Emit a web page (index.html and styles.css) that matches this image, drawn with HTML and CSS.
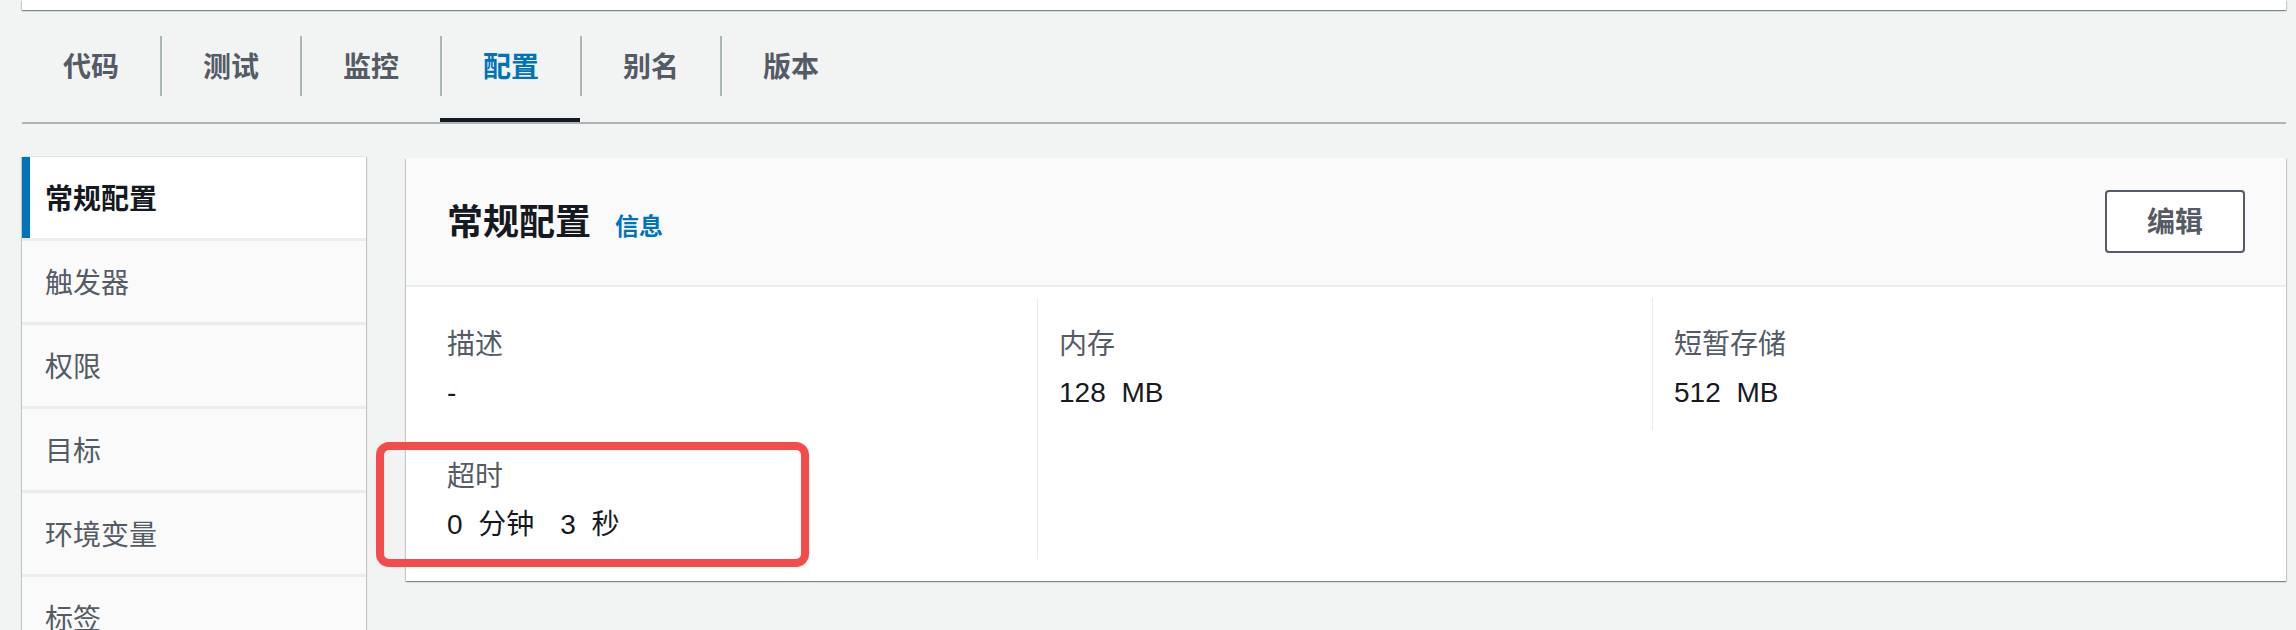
FILE: index.html
```html
<!DOCTYPE html>
<html lang="zh-CN">
<head>
<meta charset="utf-8">
<title>常规配置</title>
<link rel="stylesheet" href="styles.css">
</head>
<body>
<div class="topcard"></div>

<nav class="tabs">
  <div class="tab"><span class="tab-label first">代码</span></div>
  <div class="tab"><span class="tab-label">测试</span></div>
  <div class="tab"><span class="tab-label">监控</span></div>
  <div class="tab active"><span class="tab-label">配置</span></div>
  <div class="tab"><span class="tab-label">别名</span></div>
  <div class="tab"><span class="tab-label">版本</span></div>
</nav>

<div class="main">
  <aside class="sidenav">
    <div class="nav-item active">常规配置</div>
    <div class="nav-item">触发器</div>
    <div class="nav-item">权限</div>
    <div class="nav-item">目标</div>
    <div class="nav-item">环境变量</div>
    <div class="nav-item">标签</div>
    <div class="nav-item">VPC</div>
  </aside>

  <section class="card">
    <header class="card-header">
      <div class="title-group">
        <h2 class="card-title">常规配置</h2>
        <a class="info-link">信息</a>
      </div>
      <button class="btn">编辑</button>
    </header>
    <div class="card-body">
      <div class="col col-first">
        <div class="kv">
          <div class="kv-label">描述</div>
          <div class="kv-value">-</div>
        </div>
        <div class="kv kv-timeout">
          <div class="kv-label">超时</div>
          <div class="kv-value">0 分钟<span class="sp"></span> 3 秒</div>
          <div class="highlight"></div>
        </div>
      </div>
      <div class="col col-mid">
        <div class="kv">
          <div class="kv-label">内存</div>
          <div class="kv-value">128 MB</div>
        </div>
      </div>
      <div class="col col-last">
        <div class="kv">
          <div class="kv-label">短暂存储</div>
          <div class="kv-value">512 MB</div>
        </div>
      </div>
    </div>
  </section>
</div>
</body>
</html>
```
FILE: styles.css
```css
html, body {
  margin: 0;
  padding: 0;
  height: 630px;
  overflow: hidden;
}

body {
  background: #f2f3f3;
  font-family: "Liberation Sans", "Noto Sans CJK SC", sans-serif;
  color: #16191f;
}

.topcard {
  height: 10px;
  margin: 0 10px 0 22px;
  background: #ffffff;
  box-shadow: 0 1px 1px 0 rgba(0, 28, 36, 0.3), 1px 1px 1px 0 rgba(0, 28, 36, 0.15), -1px 1px 1px 0 rgba(0, 28, 36, 0.15);
}

/* Tabs */
.tabs {
  display: flex;
  margin: 26px 10px 0 22px;
  border-bottom: 2px solid #aab7b8;
}

.tab {
  padding-bottom: 22px;
  border-bottom: 4px solid transparent;
}

.tab.active {
  border-bottom-color: #16191f;
}

.tab-label {
  display: flex;
  align-items: center;
  box-sizing: border-box;
  height: 60px;
  padding: 4px 41px 0;
  border-left: 2px solid #aab7b8;
  font-size: 28px;
  font-weight: 700;
  color: #545b64;
  line-height: 40px;
}

.tab-label.first {
  border-left: none;
}

.tab.active .tab-label {
  color: #0073bb;
}

/* Main area */
.main {
  display: flex;
  align-items: flex-start;
  gap: 40px;
  margin: 33px 10px 0 22px;
}

.sidenav {
  flex: none;
  width: 344px;
  display: flex;
  flex-direction: column;
  gap: 3px;
  background: #eaeded;
  box-shadow: 1px 0 1px 0 rgba(0, 28, 36, 0.2), -1px 0 1px 0 rgba(0, 28, 36, 0.2);
}

.nav-item {
  box-sizing: border-box;
  height: 81px;
  display: flex;
  align-items: center;
  padding: 4px 0 0 23px;
  background: #fafafa;
  font-size: 28px;
  line-height: 40px;
  color: #545b64;
}

.nav-item.active {
  background: #ffffff;
  border-left: 8px solid #0073bb;
  padding-left: 15px;
  color: #16191f;
  font-weight: 700;
}

/* Card */
.card {
  flex: 1;
  margin-top: 1px;
  background: #ffffff;
  box-shadow: 0 1px 1px 0 rgba(0, 28, 36, 0.3), 1px 1px 1px 0 rgba(0, 28, 36, 0.15), -1px 1px 1px 0 rgba(0, 28, 36, 0.15);
}

.card-header {
  display: flex;
  justify-content: space-between;
  align-items: center;
  padding: 32px 41px 32px 41px;
  background: #fafafa;
  border-bottom: 2px solid #eaeded;
}

.title-group {
  display: flex;
  align-items: baseline;
  gap: 24px;
  padding-top: 2px;
}

.card-title {
  margin: 0;
  font-size: 36px;
  line-height: 48px;
  font-weight: 700;
  color: #16191f;
}

.info-link {
  font-size: 24px;
  font-weight: 700;
  color: #0073bb;
}

.btn {
  height: 63px;
  padding: 3px 40px 0;
  background: #ffffff;
  border: 2px solid #545b64;
  border-radius: 4px;
  font-family: "Liberation Sans", "Noto Sans CJK SC", sans-serif;
  font-size: 28px;
  font-weight: 700;
  color: #545b64;
  line-height: 40px;
}

.card-body {
  display: flex;
  align-items: flex-start;
  padding: 11px 41px 19px;
}

.col-first {
  width: 590px;
  flex: none;
}

.col-mid {
  width: 593px;
  flex: none;
  height: 261px;
  padding-left: 21px;
  border-left: 1px solid #eaeded;
}

.col-last {
  flex: 1;
  padding-left: 21px;
  border-left: 1px solid #eaeded;
}

.kv {
  padding: 27px 0 17px;
}

.kv-label {
  font-size: 28px;
  line-height: 40px;
  color: #545b64;
}

.kv-value {
  margin-top: 8px;
  font-size: 28px;
  line-height: 40px;
  color: #16191f;
  word-spacing: 8px;
}

.sp {
  display: inline-block;
  width: 10px;
}

.kv-timeout {
  position: relative;
}

.highlight {
  position: absolute;
  left: -71px;
  top: 12px;
  width: 433px;
  height: 125px;
  box-sizing: border-box;
  border: 8px solid #f44c4a;
  border-radius: 13px;
}
```
